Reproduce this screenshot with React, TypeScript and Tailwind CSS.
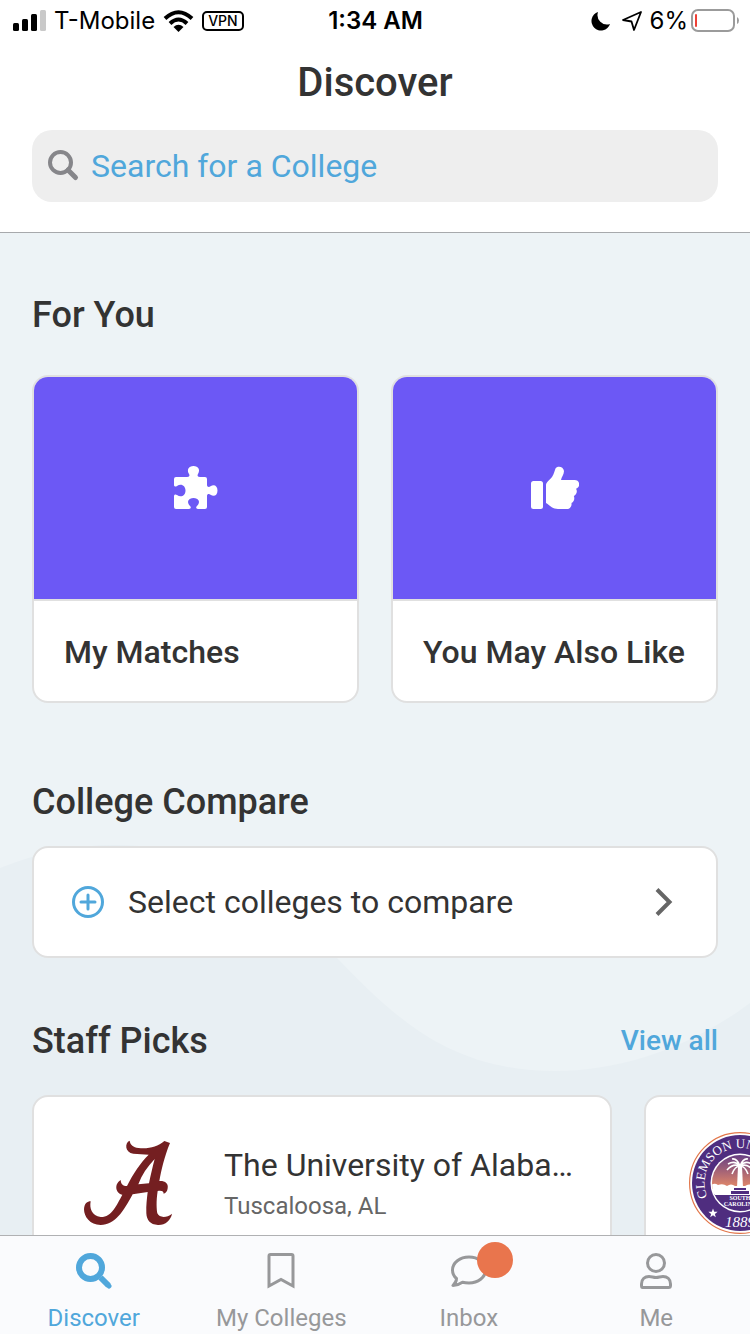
import type { ReactNode } from 'react';

interface MatchCardProps {
  title: string;
  icon: ReactNode;
}

interface CollegeCardProps {
  name: string;
  location: string;
  logo: ReactNode;
}

interface TabProps {
  label: string;
  icon: ReactNode;
  active?: boolean;
  badge?: boolean;
}

function PuzzleIcon() {
  return (
    <svg className="w-11 h-11" viewBox="0 0 44 44" fill="currentColor" aria-hidden="true">
      <path d="M2 11H13C15.500 11 16 9.500 15 8C12.500 4 14.500 0 19.500 0S26.500 4 24 8C23 9.500 23.500 11 26 11H31Q33 11 33 13V19C33 21 35 21.500 36.500 20.300C40 17.700 43.500 19.700 43.500 24.500S40 31.300 36.500 28.700C35 27.500 33 28 33 30V41Q33 43 31 43H25C22 43 21.500 41.500 23 40C27 36 24.500 32 19.500 32S12 36 16 40C17.500 41.500 17 43 14 43H2Q0 43 0 41V30C0 28.500 1.500 28 3 29C7 32 11.500 29.500 11.500 24.500S7 17 3 20C1.500 21 0 20.500 0 19V13Q0 11 2 11Z" />
    </svg>
  );
}

function ThumbIcon() {
  return (
    <svg className="w-12 h-11" viewBox="0 0 48 44" fill="currentColor" aria-hidden="true">
      <rect x="0" y="15" width="12" height="28" rx="2.500" />
      <path d="M15 19C15 16 19 14 21 11C23 8 23.500 5 24.500 2.500C26 -.5 32.500 0 33 5C33 8.500 30.500 11 30 14H43.500C49.500 14 49.500 21.500 45 22.800C46.800 25 45.500 29 42.800 30C44 32.500 43 36 40.500 37C41 40 39 43 36 43H27C22 43 19.500 40 15 37Z" />
    </svg>
  );
}

function AlabamaLogo() {
  return (
    <svg className="w-[88px] h-[86px]" viewBox="42 60 264 258" fill="#741f21" role="img" aria-label="Alabama logo">
      <path
        fillRule="evenodd"
        d="M179 62C181 75 190 82 205 84C235 88 262 80 283 63L300 69C283 110 274 150 268 183C285 182 296 190 293 205C292 213 288 220 281 221C281 214 276 211 263 213C258 245 260 270 262 280C268 294 290 294 306 281C303 300 285 316 264 315C240 314 230 300 229 280C228 255 231 235 233 216L188 223C160 275 135 315 92 315C60 315 42 290 42 268C43 250 52 244 62 244C58 265 65 288 92 291C125 292 140 255 157 224C140 222 129 195 152 180C153 193 158 198 171 198C190 160 210 130 236 104L190 101C165 98 163 68 179 62ZM254 117C232 140 215 165 205 193L237 190C242 165 248 140 254 117Z"
      />
    </svg>
  );
}

function ClemsonLogo() {
  return (
    <svg className="w-[102px] h-[102px]" viewBox="0 0 102 102" role="img" aria-label="Clemson seal">
      <defs>
        <linearGradient id="sky" x1="0" y1="0" x2="0" y2="1">
          <stop offset="0" stopColor="#5f3a86" />
          <stop offset="0.85" stopColor="#d5806b" />
          <stop offset="1" stopColor="#e0896c" />
        </linearGradient>
        <clipPath id="scene">
          <circle cx="51" cy="51" r="28" />
        </clipPath>
        <path id="ring" d="M18.500 65A35 35 0 0 1 51 16A35 35 0 0 1 83.500 65" />
      </defs>
      <circle cx="51" cy="51" r="50.400" fill="#fff" stroke="#e2764a" strokeWidth="1.200" />
      <circle cx="51" cy="51" r="48" fill="#4f2d7f" />
      <circle cx="51" cy="51" r="29.500" fill="#fff" />
      <g clipPath="url(#scene)">
        <rect x="21" y="21" width="60" height="36" fill="url(#sky)" />
        <rect x="21" y="62" width="60" height="22" fill="#4f2d7f" />
        <path d="M21 54Q25 50 29 53Q34 51 38 54Q42 51 46 54L56 54Q60 51 64 54Q70 50 81 53V63H21Z" fill="#fff" />
        <path d="M49 34H53L54 56H48Z" fill="#fff" />
        <path d="M45 56H57V58H45ZM42 59H60V62H42Z" fill="#4f2d7f" />
        <path
          d="M51 34Q46 28 39 32M51 34Q44 31 38 38M51 34Q46 34 43 42M51 34Q48 26 43 27M51 34Q56 28 63 32M51 34Q58 31 64 38M51 34Q56 34 59 42M51 34Q54 26 59 27"
          fill="none"
          stroke="#fff"
          strokeWidth="1.600"
        />
      </g>
      <g fill="#fff" fontFamily="'Liberation Serif', serif">
        <text fontSize="13">
          <textPath href="#ring">CLEMSON UNIVERSITY</textPath>
        </text>
        <text x="51" y="68" fontSize="6" fontWeight="700" textAnchor="middle">SOUTH</text>
        <text x="51" y="74" fontSize="6" fontWeight="700" textAnchor="middle">CAROLINA</text>
        <text x="51" y="95" fontSize="15" fontStyle="italic" textAnchor="middle">1889</text>
      </g>
      <path d="M24 76.500L25.200 79.700L28.600 79.800L25.900 81.900L26.800 85.200L24 83.300L21.200 85.200L22.100 81.900L19.400 79.800L22.800 79.700Z" fill="#fff" />
    </svg>
  );
}

function StatusBar() {
  return (
    <div className="grid grid-cols-[1fr_auto_1fr] items-center h-[41px] pl-3 pr-[11px] font-['Inter',sans-serif] text-2xl text-black">
      <div className="flex items-center gap-2">
        <svg className="w-[34px] h-[21px]" viewBox="0 0 34 21" aria-hidden="true">
          <rect x="1" y="13" width="6" height="8" rx="1.500" />
          <rect x="10" y="9" width="6" height="12" rx="1.500" />
          <rect x="19" y="4" width="6" height="17" rx="1.500" />
          <rect x="28" y="0" width="6" height="21" rx="1.500" fill="#c9c9c9" />
        </svg>
        <span>T-Mobile</span>
        <svg className="w-[31px] h-[22px]" viewBox="0 0 31 22" fill="none" stroke="currentColor" strokeWidth="4" aria-hidden="true">
          <path d="M2 8.500Q15.500 -4 29 8.500" />
          <path d="M7 13.500Q15.500 5.500 24 13.500" />
          <path d="M10.500 17Q15.500 12.500 20.500 17L15.500 22Z" fill="currentColor" stroke="none" />
        </svg>
        <span className="border-2 border-black rounded-[5px] h-5 px-1 text-[14px] leading-4 font-medium">VPN</span>
      </div>
      <span className="font-semibold">1:34 AM</span>
      <div className="flex items-center justify-end gap-2">
        <svg className="w-5 h-5" viewBox="0 0 20 20" fill="currentColor" aria-hidden="true">
          <path d="M7 1A9.500 9.500 0 1 0 19 13A9.500 9.500 0 0 1 7 1Z" />
        </svg>
        <svg className="w-5 h-5 ml-[3px]" viewBox="0 0 20 20" fill="none" stroke="currentColor" strokeWidth="1.800" strokeLinejoin="round" aria-hidden="true">
          <path d="M19 1L1 9L9.500 10.500L12 19Z" />
        </svg>
        <span>6%</span>
        <svg className="w-12 h-[23px] -ml-[5px]" viewBox="0 0 48 23" aria-hidden="true">
          <rect x="1" y="1" width="42" height="21" rx="6" fill="none" stroke="#9b9b9b" strokeWidth="2" />
          <rect x="4" y="5" width="2" height="13" rx="1" fill="#ee4036" />
          <path d="M46 8Q48 9 48 11.500T46 15Z" fill="#9b9b9b" />
        </svg>
      </div>
    </div>
  );
}

function MatchCard({ title, icon }: MatchCardProps) {
  return (
    <a href="#" className="flex flex-col bg-white border-2 border-[#e0e0e0] rounded-2xl overflow-hidden">
      <div className="flex items-center justify-center h-[222px] bg-[#6c58f5] text-white">{icon}</div>
      <h3 className="border-t-2 border-[#e0e0e0] px-[30px] pt-[29px] pb-[27px] text-[32px] leading-[44px] font-medium whitespace-nowrap">
        {title}
      </h3>
    </a>
  );
}

function CollegeCard({ name, location, logo }: CollegeCardProps) {
  return (
    <a
      href="#"
      className="flex items-center gap-[45px] shrink-0 w-[580px] pl-[43px] pr-9 py-[35px] bg-white border-2 border-[#e0e0e0] rounded-2xl"
    >
      <div className="flex items-center justify-center w-[102px] h-[102px] shrink-0">{logo}</div>
      <div className="min-w-0 pt-1">
        <h3 className="text-[32px] leading-[42px] truncate">{name}</h3>
        <p className="text-2xl leading-10 text-[#666]">{location}</p>
      </div>
    </a>
  );
}

function Tab({ label, icon, active, badge }: TabProps) {
  return (
    <a
      href="#"
      aria-current={active ? 'page' : undefined}
      className={`flex flex-1 flex-col items-center gap-[13px] pt-[17px] ${active ? 'text-[#50a7db]' : 'text-[#97989a]'}`}
    >
      <span className="relative">
        {icon}
        {badge && <span className="absolute -top-[11px] left-[26px] w-9 h-9 rounded-full bg-[#e9754d]" />}
      </span>
      <span className="text-2xl leading-8">{label}</span>
    </a>
  );
}

export default function App() {
  return (
    <div className="flex flex-col h-screen overflow-hidden bg-[#edf3f6] font-['Roboto',sans-serif] text-[#333]">
      <header className="bg-white border-b border-[#a7a9ac] pb-[30px]">
        <StatusBar />
        <h1 className="pt-4 text-center text-[40px] leading-[52px] font-medium">Discover</h1>
        <label className="flex items-center gap-[11px] mx-8 mt-[21px] h-[72px] px-4 rounded-[20px] bg-[#eee]">
          <svg className="w-8 h-8 shrink-0" viewBox="0 0 32 32" fill="none" stroke="#86868a" aria-hidden="true">
            <circle cx="12.500" cy="12.500" r="10.500" strokeWidth="4" />
            <path d="M20 20L27.500 27.500" strokeWidth="5" strokeLinecap="round" />
          </svg>
          <input
            type="text"
            aria-label="Search for a College"
            placeholder="Search for a College"
            className="flex-1 min-w-0 bg-transparent text-[32px] outline-none placeholder:text-[#50a7db]"
          />
        </label>
      </header>

      <main className="relative flex-1 min-h-0 overflow-hidden">
        {/* Wave behind the content */}
        <svg className="absolute inset-0 w-full h-full" viewBox="0 0 750 1002" preserveAspectRatio="none" aria-hidden="true">
          <path
            d="M0 635C38 620 75 612 115 612C210 612 265 650 337 725C395 785 450 838 555 838C620 838 690 815 750 770V1002H0Z"
            fill="#e8eff3"
          />
        </svg>

        <div className="relative px-8">
          <section className="pt-[58px]">
            <h2 className="text-4xl leading-[48px] font-medium">For You</h2>
            <div className="grid grid-cols-2 gap-8 mt-9">
              <MatchCard title="My Matches" icon={<PuzzleIcon />} />
              <MatchCard title="You May Also Like" icon={<ThumbIcon />} />
            </div>
          </section>

          <section className="pt-[75px]">
            <h2 className="text-4xl leading-[48px] font-medium">College Compare</h2>
            <button
              type="button"
              className="flex items-center w-full h-28 mt-5 pl-[38px] pr-[43px] bg-white border-2 border-[#e0e0e0] rounded-2xl text-[32px] text-left"
            >
              <svg className="w-8 h-8 mr-6" viewBox="0 0 32 32" fill="none" stroke="#50a7db" strokeWidth="3" aria-hidden="true">
                <circle cx="16" cy="16" r="14.500" />
                <path d="M16 9V23M9 16H23" strokeLinecap="round" />
              </svg>
              <span className="flex-1">Select colleges to compare</span>
              <svg className="w-[18px] h-7" viewBox="0 0 18 28" fill="none" stroke="#666" strokeWidth="4" aria-hidden="true">
                <path d="M2 1.500L14.500 14L2 26.500" />
              </svg>
            </button>
          </section>

          <section className="pt-[59px]">
            <div className="flex items-center justify-between">
              <h2 className="text-4xl leading-[48px] font-medium">Staff Picks</h2>
              <a href="#" className="text-[28px] leading-9 font-medium text-[#50a7db]">View all</a>
            </div>
            <div className="flex gap-8 mt-[30px]">
              <CollegeCard name="The University of Alabama" location="Tuscaloosa, AL" logo={<AlabamaLogo />} />
              <CollegeCard name="Clemson University" location="Clemson, SC" logo={<ClemsonLogo />} />
            </div>
          </section>
        </div>
      </main>

      <nav className="flex h-[99px] shrink-0 bg-[#fafbfd] border-t border-[#b0b1b3]">
        <Tab
          label="Discover"
          active
          icon={
            <svg className="w-9 h-9" viewBox="0 0 36 36" fill="none" stroke="currentColor" aria-hidden="true">
              <circle cx="14.500" cy="14.500" r="11.500" strokeWidth="6" />
              <path d="M24.500 24.500L32.500 32.500" strokeWidth="6" />
              <path d="M32 32L33 33" strokeWidth="5" strokeLinecap="round" />
            </svg>
          }
        />
        <Tab
          label="My Colleges"
          icon={
            <svg className="w-9 h-9" viewBox="0 0 36 36" fill="none" stroke="currentColor" strokeWidth="3" aria-hidden="true">
              <path d="M6 33V3Q6 1.500 7.500 1.500H28.500Q30 1.500 30 3V33L18 26.500Z" />
            </svg>
          }
        />
        <Tab
          label="Inbox"
          badge
          icon={
            <svg className="w-9 h-9" viewBox="0 0 36 36" fill="none" stroke="currentColor" strokeWidth="3" strokeLinejoin="round" aria-hidden="true">
              <path d="M18 4C9 4 1.500 9.500 1.500 17C1.500 20.500 3 23.500 5.500 25.500C5.500 28.500 3.500 31 2 32.500C6 32.500 9 31 11.500 29.300C13.500 29.800 15.500 30 18 30C27 30 34.500 24.500 34.500 17S27 4 18 4Z" />
            </svg>
          }
        />
        <Tab
          label="Me"
          icon={
            <svg className="w-9 h-9" viewBox="0 0 36 36" fill="none" stroke="currentColor" strokeWidth="3" strokeLinejoin="round" aria-hidden="true">
              <circle cx="18" cy="10" r="8.500" />
              <path d="M4.500 34.500Q3.500 34.500 3.500 32.500V31C3.500 26 7 23.500 11 23.500C14 23.500 15 24.500 18 24.500S22 23.500 25 23.500C29 23.500 32.500 26 32.500 31V32.500Q32.500 34.500 30.500 34.500Z" />
            </svg>
          }
        />
      </nav>
    </div>
  );
}
